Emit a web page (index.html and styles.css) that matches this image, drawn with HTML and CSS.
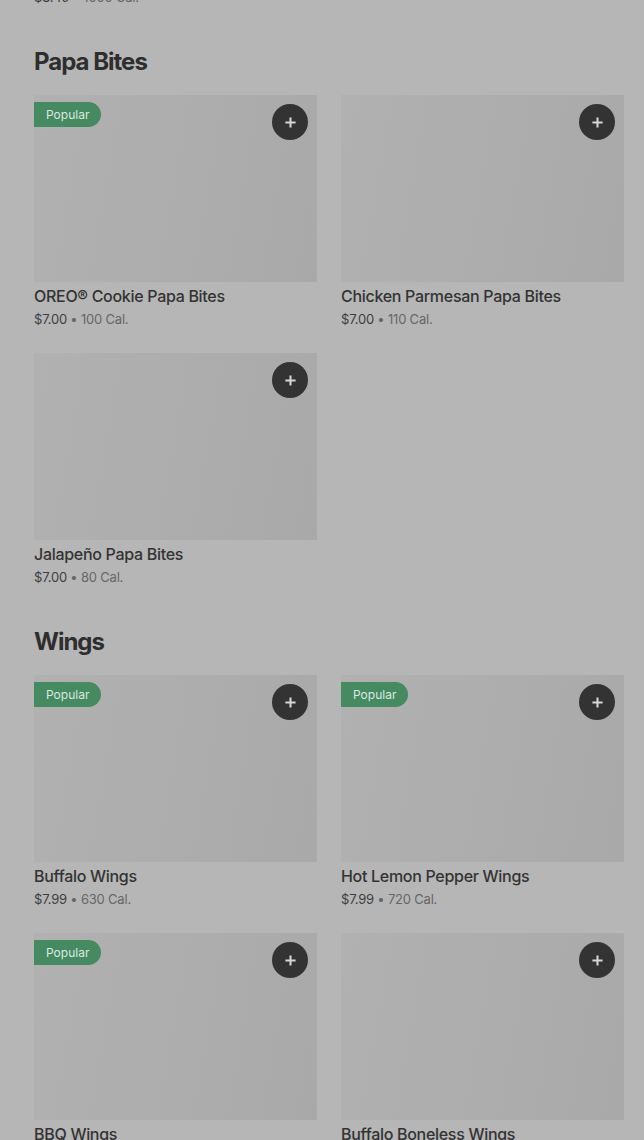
FILE: index.html
```html
<!DOCTYPE html>
<html lang="en">
<head>
<meta charset="UTF-8">
<meta name="viewport" content="width=device-width, initial-scale=1.0">
<title>Menu</title>
<link rel="stylesheet" href="styles.css">
</head>
<body>
<div class="menu">
    <p class="price top-cut"><span class="amount">$8.49</span> <span class="dot">&bull;</span> <span class="cal">1000 Cal.</span></p>

    <section class="category">
        <h2>Papa Bites</h2>
        <div class="grid">
            <div class="item">
                <div class="thumb"><span class="badge">Popular</span><button class="add"><svg viewBox="0 0 14 14"><path d="M7 1.5v11M1.5 7h11"/></svg></button></div>
                <h3>OREO&reg; Cookie Papa Bites</h3>
                <p class="price"><span class="amount">$7.00</span> <span class="dot">&bull;</span> <span class="cal">100 Cal.</span></p>
            </div>
            <div class="item">
                <div class="thumb"><button class="add"><svg viewBox="0 0 14 14"><path d="M7 1.5v11M1.5 7h11"/></svg></button></div>
                <h3>Chicken Parmesan Papa Bites</h3>
                <p class="price"><span class="amount">$7.00</span> <span class="dot">&bull;</span> <span class="cal">110 Cal.</span></p>
            </div>
            <div class="item">
                <div class="thumb"><button class="add"><svg viewBox="0 0 14 14"><path d="M7 1.5v11M1.5 7h11"/></svg></button></div>
                <h3>Jalapeño Papa Bites</h3>
                <p class="price"><span class="amount">$7.00</span> <span class="dot">&bull;</span> <span class="cal">80 Cal.</span></p>
            </div>
        </div>
    </section>

    <section class="category">
        <h2>Wings</h2>
        <div class="grid">
            <div class="item">
                <div class="thumb"><span class="badge">Popular</span><button class="add"><svg viewBox="0 0 14 14"><path d="M7 1.5v11M1.5 7h11"/></svg></button></div>
                <h3>Buffalo Wings</h3>
                <p class="price"><span class="amount">$7.99</span> <span class="dot">&bull;</span> <span class="cal">630 Cal.</span></p>
            </div>
            <div class="item">
                <div class="thumb"><span class="badge">Popular</span><button class="add"><svg viewBox="0 0 14 14"><path d="M7 1.5v11M1.5 7h11"/></svg></button></div>
                <h3>Hot Lemon Pepper Wings</h3>
                <p class="price"><span class="amount">$7.99</span> <span class="dot">&bull;</span> <span class="cal">720 Cal.</span></p>
            </div>
            <div class="item">
                <div class="thumb"><span class="badge">Popular</span><button class="add"><svg viewBox="0 0 14 14"><path d="M7 1.5v11M1.5 7h11"/></svg></button></div>
                <h3>BBQ Wings</h3>
                <p class="price"><span class="amount">$7.99</span> <span class="dot">&bull;</span> <span class="cal">640 Cal.</span></p>
            </div>
            <div class="item">
                <div class="thumb"><button class="add"><svg viewBox="0 0 14 14"><path d="M7 1.5v11M1.5 7h11"/></svg></button></div>
                <h3>Buffalo Boneless Wings</h3>
                <p class="price"><span class="amount">$7.99</span> <span class="dot">&bull;</span> <span class="cal">700 Cal.</span></p>
            </div>
        </div>
    </section>
</div>
</body>
</html>
```

FILE: styles.css
```css
* { margin: 0; padding: 0; box-sizing: border-box; }
html, body { height: 100%; overflow: hidden; }
body {
    background: #b6b6b6;
    font-family: "Inter", "Noto Sans", sans-serif;
    color: #2f2f2f;
}
.menu {
    display: flow-root;
    padding: 0 20px 0 34px;
}
.category { margin-top: 40px; }
.category h2 {
    font-size: 24px;
    line-height: 32px;
    font-weight: 700;
    letter-spacing: -1px;
    color: #2e2e2e;
    margin-bottom: 17px;
}
.grid {
    display: grid;
    grid-template-columns: 283px 283px;
    gap: 25px 24px;
}
.thumb {
    position: relative;
    height: 187px;
    background: linear-gradient(100deg, #b1b1b1 0%, #adadad 50%, #a9a9a9 100%);
}
.badge {
    position: absolute; top: 7px; left: 0;
    height: 25px; padding: 0 12px 0 12px;
    background: #468a61;
    color: #dbe9e0;
    font-size: 12px; line-height: 25px;
    border-radius: 0 13px 13px 0;
}
.add {
    position: absolute; top: 9px; right: 9px;
    width: 36px; height: 36px;
    border: none; border-radius: 50%;
    background: #333;
    display: flex; align-items: center; justify-content: center;
}
.add svg {
    width: 13px; height: 13px;
    stroke: #d6d6d6; stroke-width: 2.2; fill: none;
}
.item h3 {
    margin-top: 4px;
    font-size: 16px;
    line-height: 20px;
    font-weight: 500;
    letter-spacing: -0.3px;
    color: #333;
}
.price {
    margin-top: 4px;
    font-size: 13px;
    line-height: 18px;
    letter-spacing: -0.2px;
}
.price.top-cut { margin-top: -12px; }
.price .amount { color: #3e3e3e; }
.price .dot, .price .cal { color: #666; }
```
